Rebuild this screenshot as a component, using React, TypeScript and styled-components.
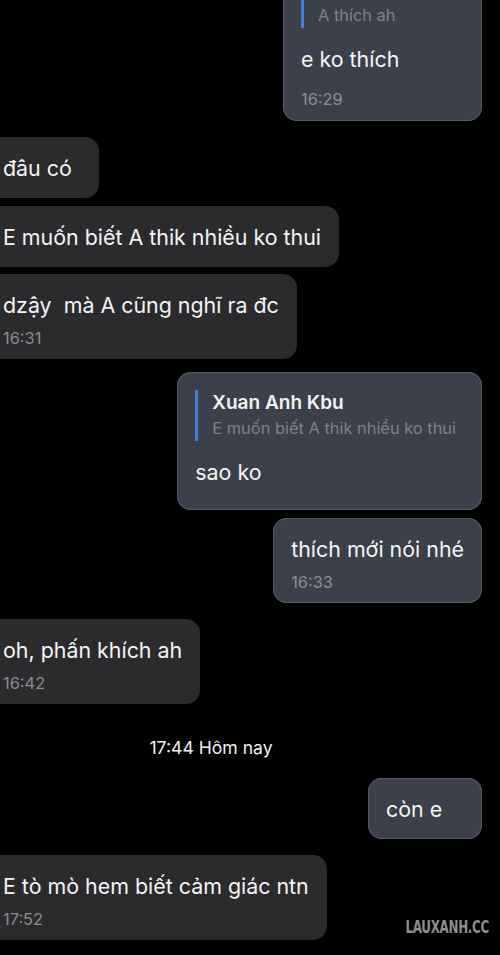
import React from "react";
import styled, { createGlobalStyle } from "styled-components";

const GlobalStyle = createGlobalStyle`
	html, body {
		margin: 0;
		padding: 0;
		background: #000;
	}
	body {
		font-family: Inter, "Noto Sans", "DejaVu Sans", sans-serif;
		-webkit-font-smoothing: antialiased;
	}
`;

const Screen = styled.div`
	position: relative;
	width: 500px;
	height: 955px;
	overflow: hidden;
	background: #000;
`;

const List = styled.div`
	display: flex;
	flex-direction: column;
	margin-top: -40px;
`;

const Row = styled.div<{ $out?: boolean; $gap: number }>`
	display: flex;
	justify-content: ${(p) => (p.$out ? "flex-end" : "flex-start")};
	margin-top: ${(p) => p.$gap}px;
	padding-right: ${(p) => (p.$out ? 18 : 0)}px;
	margin-left: ${(p) => (p.$out ? 0 : -15)}px;
`;

const Bubble = styled.div<{ $out?: boolean; $bottom: number; $right: number; $minW: number }>`
	min-width: ${(p) => p.$minW}px;
	box-sizing: border-box;
	padding: 18px ${(p) => p.$right}px ${(p) => p.$bottom}px 18px;
	border-radius: 14px;
	background: ${(p) => (p.$out ? "#3b404a" : "#2b2b2d")};
	box-shadow: ${(p) => (p.$out ? "inset 0 0 0 1px #545a64" : "none")};
	color: #f4f4f6;
`;

const Quote = styled.div<{ $lead: number }>`
	display: flex;
	flex-direction: column;
	border-left: 3px solid #3f7fe0;
	padding-left: 14px;
	padding-top: ${(p) => p.$lead}px;
	margin-bottom: 18px;
`;

const QuoteName = styled.div`
	font-size: 19px;
	font-weight: 600;
	line-height: 26px;
	color: #f2f2f4;
`;

const QuoteText = styled.div`
	font-size: 16.4px;
	line-height: 25px;
	color: #7d838d;
	white-space: nowrap;
`;

const Text = styled.div`
	font-size: 21.4px;
	line-height: 26px;
	white-space: pre;
`;

const Time = styled.div<{ $gap: number; $out?: boolean }>`
	margin-top: ${(p) => p.$gap}px;
	font-size: 16.4px;
	line-height: 20px;
	color: ${(p) => (p.$out ? "#8a909a" : "#8c8c8f")};
`;

const DateRow = styled.div`
	display: flex;
	justify-content: center;
	padding-right: 78px;
	margin-top: 33px;
	font-size: 17.6px;
	line-height: 22px;
	color: #f0f0f2;
`;

const Watermark = styled.div`
	position: absolute;
	right: 11px;
	top: 917px;
	font-family: "DejaVu Sans Condensed", "DejaVu Sans", sans-serif;
	font-weight: 700;
	font-size: 17px;
	letter-spacing: -0.4px;
	transform: scaleX(0.78);
	transform-origin: right center;
	color: #8d8d8d;
`;

interface Msg {
	out?: boolean;
	gap: number;
	text: string;
	time?: string;
	timeGap?: number;
	bottom?: number;
	right?: number;
	minW?: number;
	reply?: { name?: string; text: string; lead?: number };
}

const messages: Msg[] = [
	{ out: true, gap: 0, text: "e ko thích", time: "16:29", timeGap: 17, bottom: 12, minW: 199, reply: { text: "A thích ah", lead: 25 } },
	{ gap: 16, text: "đâu có" },
	{ gap: 8, text: "E muốn biết A thik nhiều ko thui" },
	{ gap: 7, text: "dzậy  mà A cũng nghĩ ra đc", time: "16:31" },
	{ out: true, gap: 13, text: "sao ko", bottom: 25, right: 26, reply: { name: "Xuan Anh Kbu", text: "E muốn biết A thik nhiều ko thui" } },
	{ out: true, gap: 8, text: "thích mới nói nhé", time: "16:33" },
	{ gap: 16, text: "oh, phấn khích ah", time: "16:42" },
];

const later: Msg[] = [
	{ out: true, gap: 19, text: "còn e" },
	{ gap: 16, text: "E tò mò hem biết cảm giác ntn", time: "17:52" },
];

const Message: React.FC<{ m: Msg }> = ({ m }) => (
	<Row $out={m.out} $gap={m.gap}>
		<Bubble
			$out={m.out}
			$bottom={m.bottom ?? (m.time ? 11 : 17)}
			$right={m.right ?? 18}
			$minW={m.minW ?? 114}
		>
			{m.reply && (
				<Quote $lead={m.reply.lead ?? 0}>
					{m.reply.name && <QuoteName>{m.reply.name}</QuoteName>}
					<QuoteText>{m.reply.text}</QuoteText>
				</Quote>
			)}
			<Text>{m.text}</Text>
			{m.time && (
				<Time $out={m.out} $gap={m.timeGap ?? 10}>
					{m.time}
				</Time>
			)}
		</Bubble>
	</Row>
);

const App: React.FC = () => {
	return (
		<Screen>
			<GlobalStyle />
			<List>
				{messages.map((m, i) => (
					<Message key={i} m={m} />
				))}
				<DateRow>17:44 Hôm nay</DateRow>
				{later.map((m, i) => (
					<Message key={`l${i}`} m={m} />
				))}
			</List>
			<Watermark>LAUXANH.CC</Watermark>
		</Screen>
	);
};

export default App;
